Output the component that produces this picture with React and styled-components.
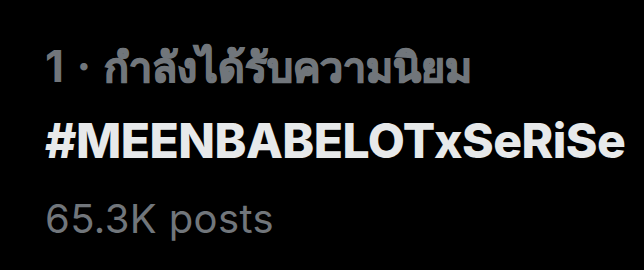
import styled, { createGlobalStyle } from 'styled-components';

const GlobalStyle = createGlobalStyle`
    html, body {
        margin: 0;
        padding: 0;
        background: #000;
    }
`;

const Page = styled.div`
    width: 644px;
    height: 270px;
    background: #000;
    box-sizing: border-box;
    padding: 36px 0 0 45px;
    display: flex;
    flex-direction: column;
    font-family: Inter, "Noto Sans", "DejaVu Sans", sans-serif;
`;

const Meta = styled.div`
    color: #71767b;
    font-size: 44px;
    font-weight: 700;
    line-height: 60px;
    white-space: nowrap;
`;

const Dot = styled.span`
    margin: 0 2px;
`;

const Thai = styled.span`
    font-size: 41px;
    -webkit-text-stroke: 1.4px #71767b;
`;

const Topic = styled.div`
    color: #e7e9ea;
    font-size: 48px;
    font-weight: 800;
    line-height: 64px;
    letter-spacing: -0.5px;
    margin-top: 12px;
`;

const Count = styled.div`
    color: #71767b;
    font-size: 40px;
    font-weight: 400;
    line-height: 56px;
    letter-spacing: 0.4px;
    margin-top: 18px;
`;

const App = () => {
    return (
        <>
            <GlobalStyle />
            <Page>
                <Meta>1 <Dot>·</Dot> <Thai>กำลังได้รับความนิยม</Thai></Meta>
                <Topic>#MEENBABELOTxSeRiSe</Topic>
                <Count>65.3K posts</Count>
            </Page>
        </>
    );
};

export default App;
